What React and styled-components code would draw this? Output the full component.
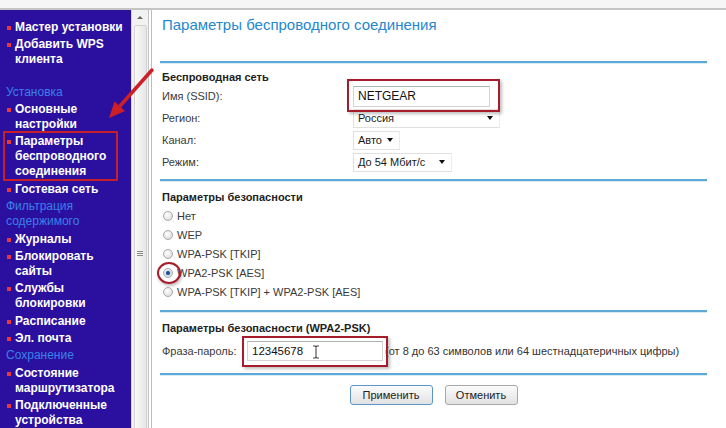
import React from 'react';
import styled, { createGlobalStyle, css } from 'styled-components';

const Global = createGlobalStyle`
  html, body { margin: 0; padding: 0; background: #fff; }
  body { font-family: "Liberation Sans", Arial, sans-serif; }
  #root { width: 726px; height: 428px; overflow: hidden; }
`;

const Page = styled.div`
  position: relative;
  width: 726px;
  height: 428px;
  overflow: hidden;
  display: flex;
  flex-direction: column;
  background: #fff;
`;

const TopStrip = styled.div`
  height: 8px;
  flex-shrink: 0;
  background: #f6f6f6;
  border-bottom: 2px solid #c4c4c4;
`;

const Body = styled.div`
  flex: 1;
  display: flex;
  min-height: 0;
`;

const Sidebar = styled.nav`
  width: 131px;
  flex-shrink: 0;
  box-sizing: border-box;
  background: #2b109f;
  display: flex;
  flex-direction: column;
  padding-top: 9.5px;
  overflow: hidden;
`;

const NavItem = styled.div`
  position: relative;
  display: flex;
  align-items: flex-start;
  padding-left: 7px;
  margin-bottom: 2.4px;
  font-size: 12px;
  font-weight: bold;
  line-height: 15px;
  color: #fff;
  ${(p) =>
    p.$marked &&
    css`
      &::after {
        content: '';
        position: absolute;
        left: 3px;
        right: 13px;
        top: -3.5px;
        bottom: -1.5px;
        border: 2px solid #c81e2a;
      }
    `}
`;

const Bullet = styled.span`
  flex-shrink: 0;
  width: 4px;
  height: 4px;
  margin-top: 6px;
  margin-right: 4px;
  background: #e8383d;
`;

const NavHeading = styled.div`
  padding-left: 6px;
  margin-bottom: 2.4px;
  font-size: 12px;
  line-height: 15px;
  color: #3a80ea;
`;

const NavRule = styled.div`
  height: 2px;
  margin: 11.8px 7px 3.5px 6px;
  background: #4f9ae8;
`;

const Scrollbar = styled.div`
  width: 18px;
  flex-shrink: 0;
  box-sizing: border-box;
  background: #f2f2f2;
  border-left: 1px solid #d9d9d9;
  border-right: 1px solid #c4c4c4;
  display: flex;
  flex-direction: column;
  align-items: center;
  overflow: hidden;
`;

const ScrollArrow = styled.span`
  margin-top: 6px;
  width: 0;
  height: 0;
  border-left: 3px solid transparent;
  border-right: 3px solid transparent;
  border-bottom: 3px solid #666;
`;

const ScrollThumb = styled.div`
  margin-top: 6px;
  width: 13px;
  height: 460px;
  flex-shrink: 0;
  box-sizing: border-box;
  background: linear-gradient(90deg, #f9f9f9, #e6e6e6);
  border: 1px solid #d2d2d2;
  border-radius: 2px;
  display: flex;
  flex-direction: column;
  align-items: center;
  padding-top: 225px;
  gap: 1px;
`;

const GripLine = styled.span`
  width: 6px;
  height: 1px;
  background: #8a8a8a;
`;

const Content = styled.main`
  flex: 1;
  min-width: 0;
  margin-left: 2px;
  border-left: 1px solid #bcbcbc;
  padding: 6px 19px 0 8px;
  font-size: 11px;
  color: #2a2a2a;
`;

const Title = styled.h1`
  margin: 0 0 27px 2px;
  font-size: 15px;
  line-height: 18px;
  font-weight: normal;
  color: #2587cf;
`;

const Rule = styled.div`
  height: 2px;
  background: #5ea8d6;
  box-shadow: 0 1px 0 #d6ecf7;
`;

const Section = styled.section`
  padding: ${(p) => p.$top}px 0 ${(p) => p.$bottom}px 2px;
`;

const SectionTitle = styled.h2`
  margin: 0;
  font-size: 11px;
  line-height: 14px;
  font-weight: bold;
  color: #222;
`;

const FieldRow = styled.div`
  display: grid;
  grid-template-columns: 191px auto;
  align-items: center;
  height: 22px;
  &:first-of-type {
    margin-top: 1px;
  }
`;

const Label = styled.span`
  color: #3a3a3a;
`;

const Highlight = styled.span`
  position: relative;
  display: inline-flex;
  width: max-content;
  &::after {
    content: '';
    position: absolute;
    top: ${(p) => p.$t}px;
    right: ${(p) => p.$r}px;
    bottom: ${(p) => p.$b}px;
    left: ${(p) => p.$l}px;
    border: 2px solid #a81b2b;
    box-shadow: 2px 2px 3px rgba(0, 0, 0, 0.25);
    pointer-events: none;
  }
`;

const TextInput = styled.input`
  box-sizing: border-box;
  width: ${(p) => p.$w}px;
  height: ${(p) => p.$h}px;
  padding: 0 4px;
  border: 1px solid #d4d4d4;
  border-top-color: #b0b0b0;
  background: #fff;
  font-family: "Liberation Sans", Arial, sans-serif;
  font-size: ${(p) => p.$fs}px;
  color: #111;
  outline: none;
`;

const SelectBox = styled.div`
  box-sizing: border-box;
  width: ${(p) => p.$w}px;
  height: 19px;
  padding: 0 6px 0 4px;
  display: flex;
  align-items: center;
  justify-content: space-between;
  gap: 4px;
  border: 1px solid #e0e0e0;
  border-right-color: #ececec;
  background: #fff;
  font-size: 11px;
  color: #1a1a1a;
`;

const Caret = styled.span`
  flex-shrink: 0;
  width: 0;
  height: 0;
  border-left: 3.5px solid transparent;
  border-right: 3.5px solid transparent;
  border-top: 4px solid #111;
`;

const RadioList = styled.div`
  display: flex;
  flex-direction: column;
  margin-top: 2px;
`;

const RadioRow = styled.label`
  display: flex;
  align-items: center;
  height: 19px;
  gap: 4.5px;
  padding-left: 0.5px;
  color: #3a3a3a;
`;

const RadioDot = styled.span`
  position: relative;
  box-sizing: border-box;
  width: 10px;
  height: 10px;
  border-radius: 50%;
  border: 1px solid #a8a8a8;
  background: radial-gradient(circle at 40% 35%, #ffffff 0%, #e6e6e6 60%, #cfcfcf 100%);
  ${(p) =>
    p.$checked &&
    css`
      &::before {
        content: '';
        position: absolute;
        left: 2px;
        top: 2px;
        width: 4px;
        height: 4px;
        border-radius: 50%;
        background: #1d4f8f;
        box-shadow: 0 0 2px #5a8fd0;
      }
    `}
  ${(p) =>
    p.$ring &&
    css`
      &::after {
        content: '';
        position: absolute;
        left: -7px;
        top: -7px;
        width: 20px;
        height: 18px;
        border-radius: 50%;
        border: 2px solid #a81b2b;
        box-shadow: 1px 2px 3px rgba(0, 0, 0, 0.25);
      }
    `}
`;

const PassRow = styled.div`
  display: flex;
  align-items: center;
  height: 22px;
  margin-top: 5px;
`;

const PassLabel = styled.span`
  width: 85px;
  flex-shrink: 0;
  color: #3a3a3a;
`;

const Hint = styled.span`
  margin-left: 2px;
  color: #333;
  white-space: nowrap;
`;

const Cursor = styled.svg`
  position: absolute;
  left: 65px;
  top: 4px;
  pointer-events: none;
`;

const ButtonRow = styled.div`
  display: flex;
  justify-content: center;
  gap: 12px;
  padding-top: 10px;
`;

const Button = styled.button`
  box-sizing: border-box;
  width: ${(p) => p.$w}px;
  height: 20px;
  padding: 0;
  border: 1px solid ${(p) => (p.$primary ? '#5d94cc' : '#a8a8a8')};
  border-radius: 3px;
  background: linear-gradient(#fbfbfb, #e2e2e2);
  font-family: "Liberation Sans", Arial, sans-serif;
  font-size: 11px;
  color: #222;
`;

const ArrowOverlay = styled.svg`
  position: absolute;
  left: 0;
  top: 0;
  pointer-events: none;
`;

const nav = [
  { t: 'item', lines: ['Мастер установки'] },
  { t: 'item', lines: ['Добавить WPS', 'клиента'] },
  { t: 'rule' },
  { t: 'head', lines: ['Установка'] },
  { t: 'item', lines: ['Основные', 'настройки'] },
  { t: 'item', lines: ['Параметры', 'беспроводного', 'соединения'], marked: true },
  { t: 'item', lines: ['Гостевая сеть'] },
  { t: 'head', lines: ['Фильтрация', 'содержимого'] },
  { t: 'item', lines: ['Журналы'] },
  { t: 'item', lines: ['Блокировать', 'сайты'] },
  { t: 'item', lines: ['Службы', 'блокировки'] },
  { t: 'item', lines: ['Расписание'] },
  { t: 'item', lines: ['Эл. почта'] },
  { t: 'head', lines: ['Сохранение'] },
  { t: 'item', lines: ['Состояние', 'маршрутизатора'] },
  { t: 'item', lines: ['Подключенные', 'устройства'] },
];

const radios = [
  'Нет',
  'WEP',
  'WPA-PSK [TKIP]',
  'WPA2-PSK [AES]',
  'WPA-PSK [TKIP] + WPA2-PSK [AES]',
];

const Lines = ({ lines }) => (
  <span>
    {lines.map((l, i) => (
      <React.Fragment key={i}>
        {i > 0 && <br />}
        {l}
      </React.Fragment>
    ))}
  </span>
);

export default function App() {
  return (
    <Page>
      <Global />
      <TopStrip />
      <Body>
        <Sidebar>
          {nav.map((n, i) => {
            if (n.t === 'rule') return <NavRule key={i} />;
            if (n.t === 'head')
              return (
                <NavHeading key={i}>
                  <Lines lines={n.lines} />
                </NavHeading>
              );
            return (
              <NavItem key={i} $marked={n.marked}>
                <Bullet />
                <Lines lines={n.lines} />
              </NavItem>
            );
          })}
        </Sidebar>
        <Scrollbar>
          <ScrollArrow />
          <ScrollThumb>
            <GripLine />
            <GripLine />
            <GripLine />
          </ScrollThumb>
        </Scrollbar>
        <Content>
          <Title>Параметры беспроводного соединения</Title>
          <Rule />
          <Section $top={7} $bottom={6}>
            <SectionTitle>Беспроводная сеть</SectionTitle>
            <FieldRow>
              <Label>Имя (SSID):</Label>
              <Highlight $t={-7} $r={-10} $b={-5} $l={-6}>
                <TextInput $w={137} $h={21} $fs={12} readOnly value="NETGEAR" />
              </Highlight>
            </FieldRow>
            <FieldRow>
              <Label>Регион:</Label>
              <SelectBox $w={147}>
                <span>Россия</span>
                <Caret />
              </SelectBox>
            </FieldRow>
            <FieldRow>
              <Label>Канал:</Label>
              <SelectBox $w={47}>
                <span>Авто</span>
                <Caret />
              </SelectBox>
            </FieldRow>
            <FieldRow>
              <Label>Режим:</Label>
              <SelectBox $w={99}>
                <span>До 54 Мбит/с</span>
                <Caret />
              </SelectBox>
            </FieldRow>
          </Section>
          <Rule />
          <Section $top={9} $bottom={9}>
            <SectionTitle>Параметры безопасности</SectionTitle>
            <RadioList>
              {radios.map((r, i) => (
                <RadioRow key={r}>
                  <RadioDot $checked={i === 3} $ring={i === 3} />
                  {r}
                </RadioRow>
              ))}
            </RadioList>
          </Section>
          <Rule />
          <Section $top={9} $bottom={11}>
            <SectionTitle>Параметры безопасности (WPA2-PSK)</SectionTitle>
            <PassRow>
              <PassLabel>Фраза-пароль:</PassLabel>
              <Highlight $t={-5} $r={-5} $b={-6} $l={-5}>
                <TextInput $w={136} $h={20} $fs={11.5} readOnly value="12345678" />
                <Cursor width="8" height="14" viewBox="0 0 8 14">
                  <path d="M1 1h2.2l0.8 0.8 0.8-0.8H7M4 1.8v10.4M1 13h2.2l0.8-0.8 0.8 0.8H7" fill="none" stroke="#444" strokeWidth="1.1" />
                </Cursor>
              </Highlight>
              <Hint>(от 8 до 63 символов или 64 шестнадцатеричных цифры)</Hint>
            </PassRow>
          </Section>
          <Rule />
          <ButtonRow>
            <Button $w={83} $primary>Применить</Button>
            <Button $w={73}>Отменить</Button>
          </ButtonRow>
        </Content>
      </Body>
      <ArrowOverlay width="726" height="428" viewBox="0 0 726 428">
        <line x1="152" y1="70" x2="120" y2="106" stroke="#cc1f26" strokeWidth="3.5" strokeLinecap="round" />
        <polygon points="109,118 125,111 114.5,101.5" fill="#cc1f26" />
      </ArrowOverlay>
    </Page>
  );
}
